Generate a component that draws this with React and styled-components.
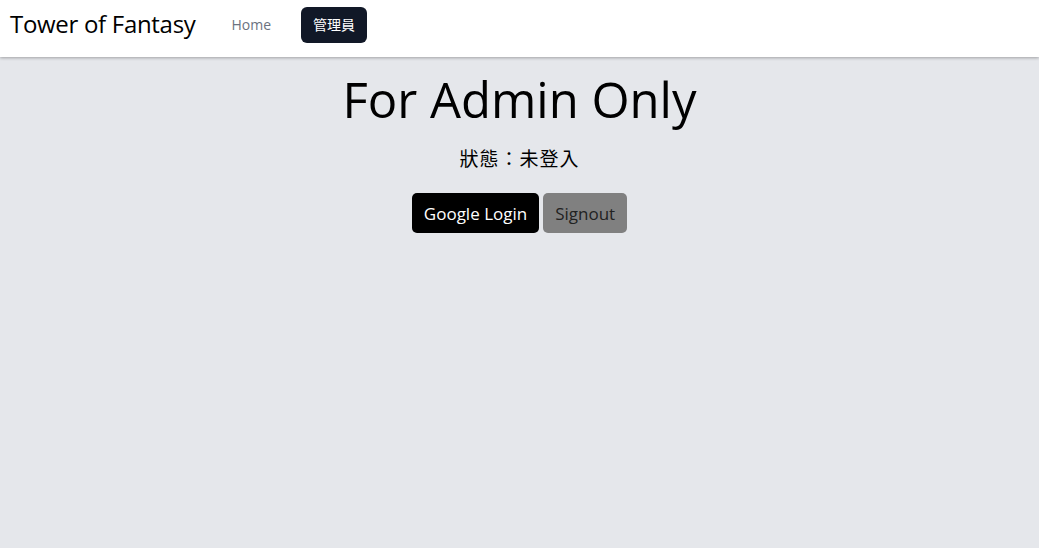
import React from 'react';
import styled, { createGlobalStyle } from 'styled-components';

const GlobalStyle = createGlobalStyle`
  html, body {
    margin: 0;
    padding: 0;
    height: 100%;
    background: #e5e7eb;
    font-family: "Open Sans", "Noto Sans", "Noto Sans CJK TC", sans-serif;
  }
  #root {
    min-height: 100%;
  }
`;

const Nav = styled.nav`
  display: flex;
  align-items: center;
  height: 57px;
  padding: 0 10px 7px;
  background: #fff;
  box-shadow: 0 1px 3px rgba(0, 0, 0, 0.3);
  box-sizing: border-box;
`;

const Brand = styled.div`
  font-size: 24px;
  color: #000;
  margin: 0 24px 3px 0;
  letter-spacing: -0.3px;
`;

const NavLink = styled.a`
  font-size: 14px;
  padding: 9px 12px;
  margin-right: ${p => (p.$active ? '0' : '18px')};
  border-radius: 6px;
  color: ${p => (p.$active ? '#fff' : '#6b7280')};
  background: ${p => (p.$active ? '#111827' : 'transparent')};
  text-decoration: none;
  font-family: "Open Sans", "Noto Sans CJK TC", sans-serif;
  line-height: 18px;
`;

const Main = styled.main`
  display: flex;
  flex-direction: column;
  align-items: center;
`;

const Title = styled.h1`
  margin: 12px 0 0;
  font-size: 49px;
  font-weight: 400;
  line-height: 60px;
  color: #000;
`;

const Status = styled.p`
  margin: 17px 0 0;
  font-size: 19px;
  line-height: 24px;
  letter-spacing: 1px;
  font-family: "Noto Sans CJK TC", sans-serif;
  text-spacing-trim: space-all;
`;

const Buttons = styled.div`
  display: flex;
  gap: 4px;
  margin-top: 23px;
`;

const Button = styled.button`
  height: 40px;
  padding: 0 12px;
  border: none;
  border-radius: 5px;
  font-size: 17px;
  font-family: "Open Sans", sans-serif;
  background: ${p => (p.$muted ? '#808080' : '#000')};
  color: ${p => (p.$muted ? '#222' : '#fff')};
  cursor: pointer;
`;

export default function App() {
  return (
    <>
      <GlobalStyle />
      <Nav>
        <Brand>Tower of Fantasy</Brand>
        <NavLink href="#">Home</NavLink>
        <NavLink href="#" $active>管理員</NavLink>
      </Nav>
      <Main>
        <Title>For Admin Only</Title>
        <Status>狀態：未登入</Status>
        <Buttons>
          <Button>Google Login</Button>
          <Button $muted>Signout</Button>
        </Buttons>
      </Main>
    </>
  );
}
